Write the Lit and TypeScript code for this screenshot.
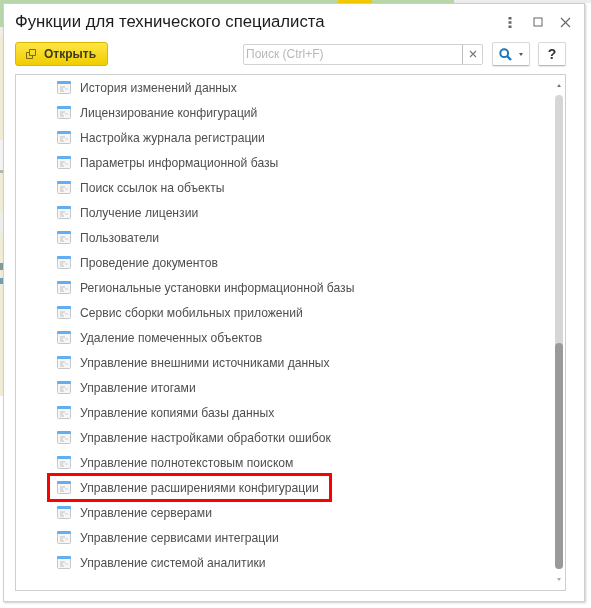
import { LitElement, html, css, svg } from "lit";
import { customElement } from "lit/decorators.js";

const ITEMS = [
  "История изменений данных",
  "Лицензирование конфигураций",
  "Настройка журнала регистрации",
  "Параметры информационной базы",
  "Поиск ссылок на объекты",
  "Получение лицензии",
  "Пользователи",
  "Проведение документов",
  "Региональные установки информационной базы",
  "Сервис сборки мобильных приложений",
  "Удаление помеченных объектов",
  "Управление внешними источниками данных",
  "Управление итогами",
  "Управление копиями базы данных",
  "Управление настройками обработки ошибок",
  "Управление полнотекстовым поиском",
  "Управление расширениями конфигурации",
  "Управление серверами",
  "Управление сервисами интеграции",
  "Управление системой аналитики",
];

const itemIcon = svg`<svg class="ico" width="15" height="15" viewBox="0 0 15 15">
  <rect x="0.5" y="1.5" width="13" height="12" rx="1" fill="#f6f6f6" stroke="#c2c8ce"/>
  <rect x="0" y="1" width="14" height="3" rx="1" fill="#62aef0"/>
  <rect x="3" y="6.5" width="5" height="1" fill="#bdbdbd"/>
  <rect x="3" y="8.5" width="3" height="1" fill="#bdbdbd"/>
  <rect x="3" y="10.5" width="4" height="1" fill="#bdbdbd"/>
  <rect x="8" y="8.5" width="3" height="1" fill="#d0d0d0"/>
</svg>`;

@customElement("app-root")
export class AppRoot extends LitElement {
  static styles = css`
    :host {
      display: block;
      width: 591px;
      height: 608px;
      overflow: hidden;
      background: #fff;
      font-family: "Liberation Sans", Arial, sans-serif;
    }
    .stage { display: flex; flex-direction: column; width: 591px; height: 608px; filter: blur(0.35px); }
    .strip { display: flex; height: 3px; flex: none; }
    .g1 { width: 338px; background: #b9d6ab; }
    .y { width: 34px; background: #f3c800; }
    .g2 { width: 82px; background: #b9d6ab; }
    .w { flex: 1; background: #ececec; }
    .body { display: flex; flex: none; }
    .side { width: 3px; flex: none; display: flex; flex-direction: column; }
    .s { flex: none; }
    .green { height: 24px; background: #b9d6ab; }
    .pale { height: 8px; background: #eeeeea; }
    .cream { height: 105px; background: #f1ecd6; }
    .whitebox { height: 30px; background: #f4f4f4; }
    .greyline { height: 3px; background: #b5b5ad; }
    .cream2 { height: 40px; background: #f1ecd6; }
    .pale2 { height: 20px; background: #eeeeea; }
    .cream3 { height: 30px; background: #f1ecd6; }
    .teal { height: 7px; background: #7f9a9a; }
    .cream4 { height: 8px; background: #f1ecd6; }
    .teal2 { height: 6px; background: #6f9fb0; }
    .cream5 { height: 112px; background: #f1ecd6; }
    .win {
      flex: none;
      box-sizing: border-box;
      width: 582px;
      height: 599px;
      background: #fff;
      border: 1px solid #cfcfcf;
      box-shadow: 1px 1px 2px rgba(0,0,0,.2);
      padding: 0 18px 0 11px;
      display: flex;
      flex-direction: column;
    }
    .title {
      display: flex; align-items: center; height: 36px; flex: none;
      font-size: 16.75px; color: #1c1c1c;
      margin-right: -5px;
    }
    .title span.t { flex: 1; }
    .winbtn { display: flex; align-items: center; }
    .b-sq { margin-left: 21px; }
    .b-x { margin-left: 17px; }
    .toolbar { display: flex; align-items: center; height: 24px; flex: none; margin-top: 2px; }
    .open {
      box-sizing: border-box; display: flex; align-items: center; gap: 7px;
      width: 93px; height: 24px; padding-left: 9px;
      background: linear-gradient(#fde545, #f0cd00);
      border: 1px solid #d9b800; border-radius: 3px;
      font-size: 12px; font-weight: 700; color: #3c3a20;
    }
    .spacer { flex: 1; }
    .search {
      box-sizing: border-box; display: flex; width: 240px; height: 21px;
      border: 1px solid #d2d2d2; border-radius: 2px; margin-right: 9px;
      align-items: stretch; font-size: 12px; color: #b8b8b8;
    }
    .search .ph { flex: 1; padding-left: 2px; line-height: 19px; }
    .search .x { width: 19px; border-left: 1px solid #bdbdbd; display: flex; align-items: center; justify-content: center; }
    .tb {
      box-sizing: border-box; height: 24px; background: #fff;
      border: 1px solid #d8d8d8; border-bottom-color: #bcbcbc; border-radius: 2px;
      box-shadow: 0 1px 1px rgba(0,0,0,.1);
      display: flex; align-items: center; justify-content: center;
    }
    .find { width: 38px; gap: 7px; margin-right: 8px; }
    .help { width: 28px; font-size: 14px; font-weight: 700; color: #333; }
    .caret { width: 0; height: 0; border: 2px solid transparent; border-top: 3px solid #555; border-bottom: 0; }
    .list {
      position: relative; flex: none; box-sizing: border-box;
      height: 517px; margin-top: 8px;
      border: 1px solid #cfcfcf; padding: 0 0 0 41px;
    }
    .row {
      display: flex; align-items: center; gap: 8px; height: 25px;
      font-size: 12.13px; color: #4f4f4f; white-space: nowrap;
    }
    .mark {
      position: absolute; left: 31px; top: 398px; width: 279px; height: 23px;
      border: 3px solid #f00; box-sizing: content-box; pointer-events: none;
    }
    .track { position: absolute; right: 2px; top: 20px; width: 8px; height: 474px; border-radius: 4px; background: #d6d6d6; }
    .thumb { position: absolute; left: 0; right: 0; bottom: 0; height: 226px; border-radius: 4px; background: #9a9a9a; }
    .arr { position: absolute; right: 4px; width: 0; height: 0; border: 2.5px solid transparent; }
    .up { top: 9px; border-bottom: 3px solid #777; border-top: 0; }
    .down { top: 503px; border-top: 3px solid #aaa; border-bottom: 0; }
  `;

  render() {
    return html`<div class="stage">
      <div class="strip"><div class="g1"></div><div class="y"></div><div class="g2"></div><div class="w"></div></div>
      <div class="body">
        <div class="side">
          <div class="s green"></div><div class="s pale"></div><div class="s cream"></div>
          <div class="s whitebox"></div><div class="s greyline"></div><div class="s cream2"></div>
          <div class="s pale2"></div><div class="s cream3"></div><div class="s teal"></div>
          <div class="s cream4"></div><div class="s teal2"></div><div class="s cream5"></div>
        </div>
        <div class="win">
          <div class="title">
            <span class="t">Функции для технического специалиста</span>
            <div class="winbtn">
              <svg width="4" height="11" viewBox="0 0 4 11"><g fill="#666"><rect x="0.5" y="0" width="3" height="2.5"/><rect x="0.5" y="4.25" width="3" height="2.5"/><rect x="0.5" y="8.5" width="3" height="2.5"/></g></svg>
              <svg class="b-sq" width="10" height="10" viewBox="0 0 10 10"><rect x="1" y="1" width="8" height="8" fill="none" stroke="#666" stroke-width="1"/></svg>
              <svg class="b-x" width="11" height="11" viewBox="0 0 11 11"><path d="M1 1l9 9M10 1l-9 9" stroke="#666" stroke-width="1.1" fill="none"/></svg>
            </div>
          </div>
          <div class="toolbar">
            <div class="open">
              <svg width="12" height="12" viewBox="0 0 12 12"><path d="M4.5 1.5h6v6h-6zM4.5 4.5h-3v6h6v-3" fill="none" stroke="#7a6a10"/></svg>
              <span>Открыть</span>
            </div>
            <div class="spacer"></div>
            <div class="search">
              <div class="ph">Поиск (Ctrl+F)</div>
              <div class="x"><svg width="8" height="8" viewBox="0 0 8 8"><path d="M1 1l6 6M7 1l-6 6" stroke="#777" stroke-width="1.1"/></svg></div>
            </div>
            <div class="tb find">
              <svg width="13" height="13" viewBox="0 0 13 13"><circle cx="5.2" cy="5.2" r="3.9" fill="none" stroke="#1f76ba" stroke-width="2"/><path d="M8 8l4 4" stroke="#1f76ba" stroke-width="2.4"/></svg>
              <span class="caret"></span>
            </div>
            <div class="tb help">?</div>
          </div>
          <div class="list">
            ${ITEMS.map((t) => html`<div class="row">${itemIcon}<span>${t}</span></div>`)}
            <div class="mark"></div>
            <div class="arr up"></div>
            <div class="track"><div class="thumb"></div></div>
            <div class="arr down"></div>
          </div>
        </div>
      </div>
    </div>`;
  }
}
